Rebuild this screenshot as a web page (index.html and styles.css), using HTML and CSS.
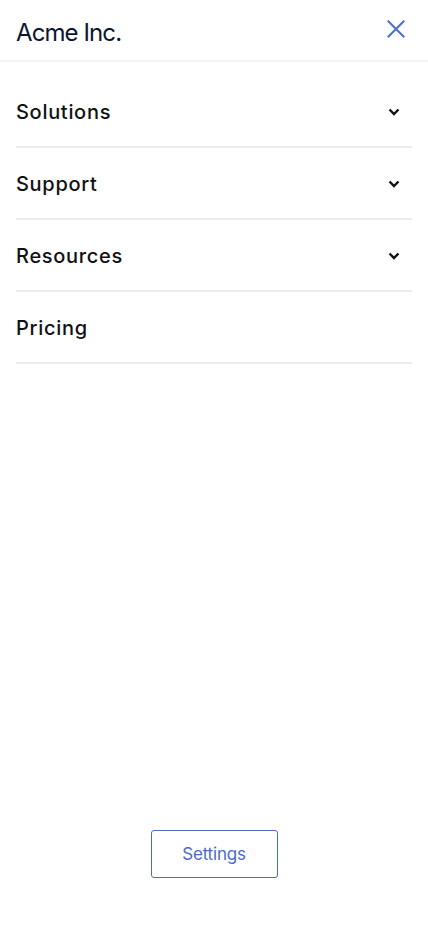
FILE: index.html
```html
<!DOCTYPE html>
<html lang="en">
<head>
<meta charset="utf-8">
<meta name="viewport" content="width=device-width, initial-scale=1">
<title>Acme Inc. Menu</title>
<link rel="stylesheet" href="styles.css">
</head>
<body>
<div class="page">
  <header class="header">
    <span class="brand">Acme Inc.</span>
    <button class="close" aria-label="Close">
      <svg width="18" height="18" viewBox="0 0 18 18" fill="none"><path d="M1.5 1.5L16.5 16.5M16.5 1.5L1.5 16.5" stroke="#4a6fd0" stroke-width="2" stroke-linecap="square"/></svg>
    </button>
  </header>
  <nav class="nav">
    <div class="row"><span class="label">Solutions</span><svg class="chev" width="12" height="8" viewBox="0 0 12 8" fill="none"><path d="M1.5 1.5L6 6L10.5 1.5" stroke="#111" stroke-width="2.4"/></svg></div>
    <div class="row"><span class="label">Support</span><svg class="chev" width="12" height="8" viewBox="0 0 12 8" fill="none"><path d="M1.5 1.5L6 6L10.5 1.5" stroke="#111" stroke-width="2.4"/></svg></div>
    <div class="row"><span class="label">Resources</span><svg class="chev" width="12" height="8" viewBox="0 0 12 8" fill="none"><path d="M1.5 1.5L6 6L10.5 1.5" stroke="#111" stroke-width="2.4"/></svg></div>
    <div class="row"><span class="label">Pricing</span></div>
  </nav>
  <footer class="footer">
    <button class="settings">Settings</button>
  </footer>
</div>
</body>
</html>
```
FILE: styles.css
```css
* { box-sizing: border-box; }
html, body { margin: 0; padding: 0; background: #fff; }
body { font-family: Inter, "Noto Sans", sans-serif; }
.page { min-height: 926px; display: flex; flex-direction: column; }
.header {
  height: 62px;
  border-bottom: 2px solid #f3f3f4;
  display: flex;
  align-items: center;
  justify-content: space-between;
  padding: 4px 16px 0 16px;
}
.brand { font-size: 24px; font-weight: 400; color: #0d1530; letter-spacing: -0.9px; }
.close { background: none; border: 0; padding: 0; width: 18px; height: 18px; display: flex; margin-right: 7px; margin-top: -6px; }
.nav { padding: 14px 16px 0 16px; display: flex; flex-direction: column; }
.row {
  height: 72px;
  border-bottom: 2px solid #ececec;
  display: flex;
  align-items: center;
  justify-content: space-between;
  padding-top: 2px;
}
.label { font-size: 20px; font-weight: 500; color: #111; letter-spacing: 0.7px; }
.chev { margin-right: 12px; }
.footer { margin-top: auto; display: flex; justify-content: center; padding-bottom: 48px; }
.settings {
  width: 127px; height: 48px;
  border: 1px solid #4f6cb6;
  border-radius: 3px;
  background: #fff;
  color: #4a6cc4;
  font-family: Inter, sans-serif;
  font-size: 17px;
  font-weight: 400;
  letter-spacing: -0.2px;
}
```
